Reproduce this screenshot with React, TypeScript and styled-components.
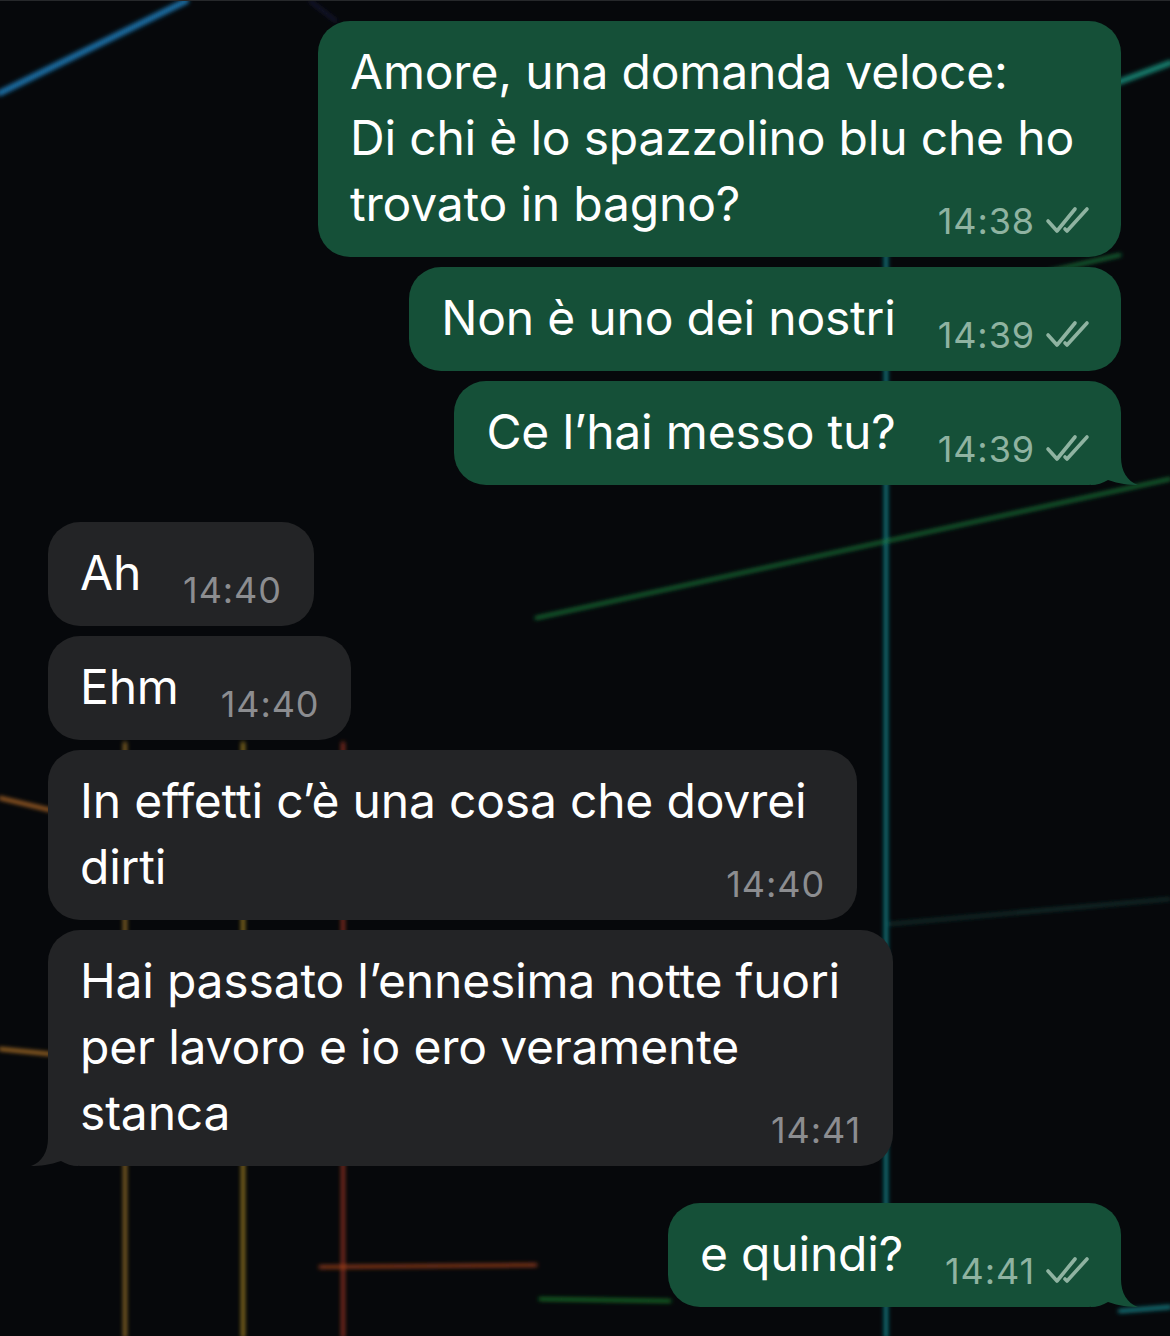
import React from 'react';
import styled, { createGlobalStyle } from 'styled-components';

const GlobalStyle = createGlobalStyle`
  html, body {
    margin: 0;
    padding: 0;
    background: #06080b;
  }
  * {
    box-sizing: border-box;
  }
`;

const Page = styled.div`
  position: relative;
  width: 1170px;
  height: 1336px;
  overflow: hidden;
  background: #06080b;
  border-top: 1px solid #26282b;
  font-family: Inter, 'Noto Sans', 'Liberation Sans', sans-serif;
`;

// decorative neon wallpaper behind the chat
const Wallpaper = styled.svg`
  position: absolute;
  inset: 0;
  pointer-events: none;
`;

const Thread = styled.div`
  position: relative;
  display: flex;
  flex-direction: column;
  gap: 37px;
  padding: 20px 49px 0 48px;
`;

const Group = styled.div<{ $out?: boolean }>`
  display: flex;
  flex-direction: column;
  align-items: ${(p) => (p.$out ? 'flex-end' : 'flex-start')};
  gap: 10px;
`;

const Bubble = styled.div<{ $out?: boolean; $minW?: number }>`
  position: relative;
  min-width: ${(p) => (p.$minW ? `${p.$minW}px` : 'auto')};
  background: ${(p) => (p.$out ? '#155038' : '#232426')};
  color: #ffffff;
  border-radius: 32px;
  padding: ${(p) => (p.$out ? '18px 30px 20px 32px' : '18px 32px 20px 32px')};
  font-size: 48px;
  line-height: 66px;
  letter-spacing: -0.2px;
`;

const Line = styled.div`
  white-space: nowrap;
`;

const LastRow = styled.div`
  display: flex;
  align-items: flex-end;
  justify-content: space-between;
  gap: 42px;
  white-space: nowrap;
`;

const Meta = styled.div<{ $out?: boolean }>`
  display: flex;
  align-items: baseline;
  gap: 10px;
  margin-bottom: -4px;
  font-size: 36px;
  line-height: 40px;
  letter-spacing: 0.9px;
  color: ${(p) => (p.$out ? '#8fb3a1' : '#8c8d90')};
`;

const Tail = styled.svg<{ $out?: boolean }>`
  position: absolute;
  bottom: 0;
  width: 50px;
  height: 50px;
  ${(p) => (p.$out ? 'right: -20px;' : 'left: -20px; transform: scaleX(-1);')}
`;

const Checks = () => (
  <svg width="46" height="28" viewBox="0 0 46 28" fill="none">
    <path d="M3 15 L12 25 L30 3" stroke="#8fb3a1" strokeWidth="3.6" strokeLinecap="round" strokeLinejoin="round" />
    <path d="M20 23 L22 25 L42 3" stroke="#8fb3a1" strokeWidth="3.6" strokeLinecap="round" strokeLinejoin="round" />
  </svg>
);

interface Msg {
  lines: string[];
  time: string;
  tail?: boolean;
  minW?: number;
}

const Message: React.FC<{ msg: Msg; out?: boolean }> = ({ msg, out }) => {
  const last = msg.lines[msg.lines.length - 1];
  return (
    <Bubble $out={out} $minW={msg.minW}>
      {msg.lines.slice(0, -1).map((l) => (
        <Line key={l}>{l}</Line>
      ))}
      <LastRow>
        <span>{last}</span>
        <Meta $out={out}>
          <span>{msg.time}</span>
          {out && <Checks />}
        </Meta>
      </LastRow>
      {msg.tail && (
        <Tail $out={out} viewBox="0 0 50 50">
          <path
            d="M0 0 H30 V22 C30 36 36 46 47 50 C38 50 28 49 17 45 C12 48 6 50 0 50 Z"
            fill={out ? '#155038' : '#232426'}
          />
        </Tail>
      )}
    </Bubble>
  );
};

const first: Msg[] = [
  {
    lines: ['Amore, una domanda veloce:', 'Di chi è lo spazzolino blu che ho', 'trovato in bagno?'],
    time: '14:38',
    minW: 803,
  },
  { lines: ['Non è uno dei nostri'], time: '14:39' },
  { lines: ['Ce l’hai messo tu?'], time: '14:39', tail: true },
];

const replies: Msg[] = [
  { lines: ['Ah'], time: '14:40' },
  { lines: ['Ehm'], time: '14:40' },
  { lines: ['In effetti c’è una cosa che dovrei', 'dirti'], time: '14:40', minW: 809 },
  {
    lines: ['Hai passato l’ennesima notte fuori', 'per lavoro e io ero veramente', 'stanca'],
    time: '14:41',
    tail: true,
    minW: 845,
  },
];

const last: Msg[] = [{ lines: ['e quindi?'], time: '14:41', tail: true }];

const App: React.FC = () => (
  <>
    <GlobalStyle />
    <Page>
      <Wallpaper width="1170" height="1336" viewBox="0 0 1170 1336">
        <defs>
          <filter id="glow" x="-20%" y="-20%" width="140%" height="140%">
            <feGaussianBlur stdDeviation="2.2" />
          </filter>
        </defs>
        <g filter="url(#glow)" strokeLinecap="round">
          <line x1="0" y1="92" x2="186" y2="0" stroke="#1d6fa6" strokeWidth="6" />
          <line x1="310" y1="0" x2="336" y2="20" stroke="#25254d" strokeWidth="2" />
          <line x1="1100" y1="88" x2="1170" y2="62" stroke="#15806f" strokeWidth="6" />
          <line x1="1050" y1="270" x2="1120" y2="254" stroke="#1b7a3c" strokeWidth="3" />
          <line x1="886" y1="250" x2="886" y2="1336" stroke="#10787e" strokeWidth="4" />
          <line x1="536" y1="617" x2="1170" y2="478" stroke="#1a7d3a" strokeWidth="3" />
          <line x1="890" y1="923" x2="1170" y2="898" stroke="#1a4640" strokeWidth="2" />
          <line x1="0" y1="797" x2="50" y2="809" stroke="#c8762c" strokeWidth="3" />
          <line x1="0" y1="1048" x2="50" y2="1053" stroke="#c8822c" strokeWidth="3" />
          <line x1="125" y1="742" x2="125" y2="1336" stroke="#a67a28" strokeWidth="3" />
          <line x1="243" y1="742" x2="243" y2="1336" stroke="#b08c26" strokeWidth="3" />
          <line x1="343" y1="742" x2="343" y2="1336" stroke="#a23420" strokeWidth="3" />
          <line x1="320" y1="1266" x2="536" y2="1264" stroke="#a8421f" strokeWidth="3" />
          <line x1="540" y1="1298" x2="670" y2="1300" stroke="#1d7e2a" strokeWidth="3" />
          <line x1="1120" y1="1310" x2="1170" y2="1306" stroke="#177a80" strokeWidth="4" />
        </g>
      </Wallpaper>
      <Thread>
        <Group $out>
          {first.map((m) => (
            <Message key={m.lines[0]} msg={m} out />
          ))}
        </Group>
        <Group>
          {replies.map((m) => (
            <Message key={m.lines[0]} msg={m} />
          ))}
        </Group>
        <Group $out>
          {last.map((m) => (
            <Message key={m.lines[0]} msg={m} out />
          ))}
        </Group>
      </Thread>
    </Page>
  </>
);

export default App;
